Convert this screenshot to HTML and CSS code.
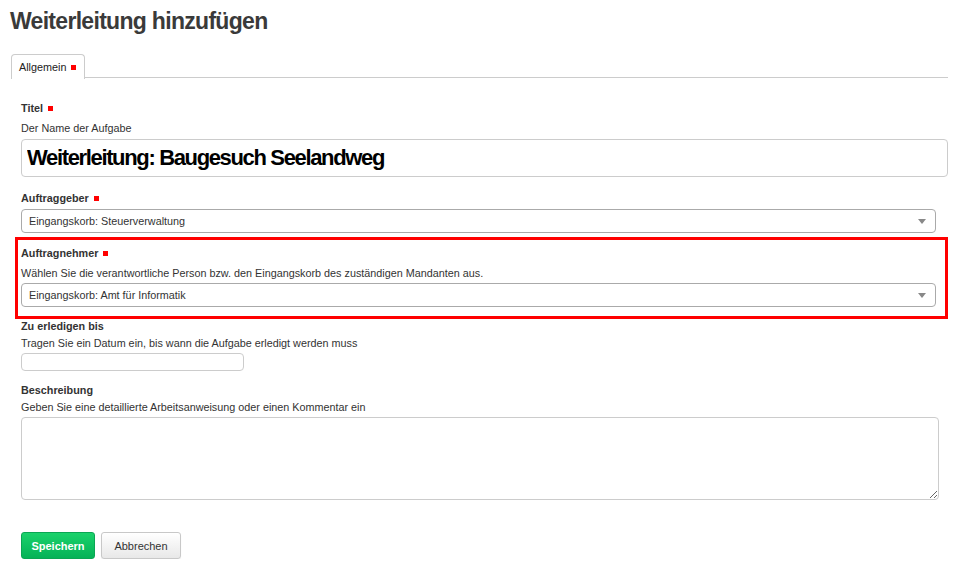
FILE: index.html
```html
<!DOCTYPE html>
<html lang="de">
<head>
<meta charset="utf-8">
<title>Weiterleitung hinzufügen</title>
<link rel="stylesheet" href="styles.css">
</head>
<body>
<div class="page">
  <h1 class="page-title">Weiterleitung hinzufügen</h1>
  <div class="tabs">
    <div class="tab">Allgemein <span class="req"></span></div>
  </div>
  <form class="form">
    <div class="field field-title">
      <label class="label">Titel <span class="req"></span></label>
      <div class="help">Der Name der Aufgabe</div>
      <input class="input-title" type="text" value="Weiterleitung: Baugesuch Seelandweg">
    </div>
    <div class="field field-giver">
      <label class="label">Auftraggeber <span class="req"></span></label>
      <div class="select"><span>Eingangskorb: Steuerverwaltung</span><span class="arrow"></span></div>
    </div>
    <div class="field highlight">
      <label class="label">Auftragnehmer <span class="req"></span></label>
      <div class="help">Wählen Sie die verantwortliche Person bzw. den Eingangskorb des zuständigen Mandanten aus.</div>
      <div class="select"><span>Eingangskorb: Amt für Informatik</span><span class="arrow"></span></div>
    </div>
    <div class="field field-date">
      <label class="label">Zu erledigen bis</label>
      <div class="help">Tragen Sie ein Datum ein, bis wann die Aufgabe erledigt werden muss</div>
      <input class="input-date" type="text">
    </div>
    <div class="field field-desc">
      <label class="label">Beschreibung</label>
      <div class="help">Geben Sie eine detaillierte Arbeitsanweisung oder einen Kommentar ein</div>
      <textarea class="textarea"></textarea>
    </div>
    <div class="actions">
      <button type="button" class="btn btn-save">Speichern</button>
      <button type="button" class="btn btn-cancel">Abbrechen</button>
    </div>
  </form>
</div>
</body>
</html>
```

FILE: styles.css
```css
* { box-sizing: border-box; }
html, body { margin: 0; padding: 0; background: #fff; }
body {
  font-family: "Liberation Sans", Arial, sans-serif;
  font-size: 10.8px;
  color: #333;
}
.page { padding: 6px 26px 0 10px; }
.page-title {
  margin: 0;
  font-size: 23px;
  line-height: 30px;
  font-weight: bold;
  letter-spacing: -0.7px;
  color: #3a3a3a;
}
.tabs {
  margin-top: 17px;
  margin-left: 1px;
  border-bottom: 1px solid #ccc;
  height: 25px;
  display: flex;
}
.tab {
  width: 74px;
  height: 25px;
  border: 1px solid #ccc;
  border-bottom: none;
  border-radius: 4px 4px 0 0;
  background: #fff;
  padding: 5px 0 0 7px;
  line-height: 15px;
  color: #222;
  position: relative;
  top: 1px;
}
.req {
  display: inline-block;
  width: 5px;
  height: 5px;
  background: #f00;
  margin-left: 2px;
  vertical-align: 1px;
}
.form { padding: 23px 0 0 11px; }
.field { display: flex; flex-direction: column; align-items: flex-start; }
.label { font-weight: bold; line-height: 15px; color: #333; }
.help { line-height: 15px; color: #333; }
.field-title .help { margin-top: 5px; }
.field-title .input-title { margin-top: 3px; }
.input-title {
  width: 927px;
  height: 38px;
  border: 1px solid #ccc;
  border-radius: 4px;
  padding: 0 0 1px 5px;
  font-family: "Liberation Sans", Arial, sans-serif;
  font-size: 22px;
  font-weight: bold;
  letter-spacing: -1.35px;
  color: #000;
  outline: none;
}
.field-giver { margin-top: 14px; }
.field-giver .select { margin-top: 3px; }
.select {
  width: 915px;
  height: 24px;
  border: 1px solid #aaa;
  border-radius: 4px;
  background: #fff;
  display: flex;
  align-items: center;
  justify-content: space-between;
  padding: 0 9px 0 7px;
  color: #333;
}
.arrow {
  width: 0;
  height: 0;
  border-left: 4px solid transparent;
  border-right: 4px solid transparent;
  border-top: 5px solid #888;
}
.highlight {
  margin: 4px 0 0 -6px;
  border: 3px solid #f00;
  padding: 6px 3px 9px 3px;
}
.highlight .help { margin-top: 5px; }
.highlight .select { margin-top: 2px; }
.field-date .help { margin-top: 2px; }
.input-date {
  margin-top: 2px;
  width: 223px;
  height: 18px;
  border: 1px solid #ccc;
  border-radius: 4px;
  outline: none;
}
.field-desc { margin-top: 12px; }
.field-desc .help { margin-top: 2px; }
.textarea {
  margin-top: 2px;
  width: 918px;
  height: 83px;
  border: 1px solid #ccc;
  border-radius: 4px;
  resize: both;
  outline: none;
}
.actions { margin-top: 32px; display: flex; gap: 6px; }
.btn {
  height: 27px;
  border-radius: 3px;
  font-family: "Liberation Sans", Arial, sans-serif;
  font-size: 11px;
  padding: 0;
  cursor: pointer;
}
.btn-save {
  width: 74px;
  background: linear-gradient(#1ad26b, #05b257);
  border: 1px solid #0aa653;
  color: #fff;
  font-weight: bold;
}
.btn-cancel {
  width: 80px;
  background: linear-gradient(#fff, #e8e8e8);
  border: 1px solid #c8c8c8;
  color: #333;
  box-shadow: 0 1px 1px rgba(0,0,0,0.08);
}
```
